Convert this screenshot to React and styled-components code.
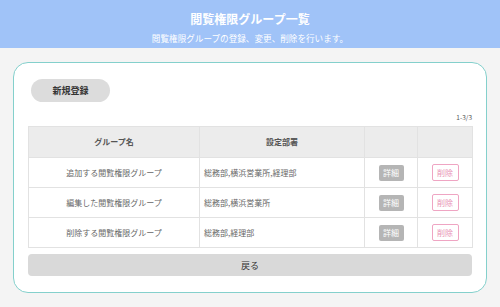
import React from "react";
import styled, { createGlobalStyle } from "styled-components";

const GlobalStyle = createGlobalStyle`
  html, body {
    margin: 0;
    padding: 0;
    background: #f4f4f4;
    font-family: "Noto Sans CJK JP", "Noto Sans", sans-serif;
  }
`;

const Header = styled.header`
  height: 48px;
  background: #a0c3f8;
  color: #fff;
  display: flex;
  flex-direction: column;
  align-items: center;
  box-sizing: border-box;
  padding-top: 10px;
`;

const Title = styled.h1`
  margin: 0;
  font-size: 12px;
  line-height: 18px;
  font-weight: bold;
`;

const Subtitle = styled.p`
  margin: 4px 0 0;
  font-size: 8.6px;
  line-height: 12px;
`;

const Main = styled.main`
  padding: 14px 13px 0;
`;

const Card = styled.section`
  background: #fff;
  border: 1px solid #84d0cc;
  border-radius: 15px;
  padding: 16px 14px 16px;
  display: flex;
  flex-direction: column;
  align-items: flex-start;
`;

const PillButton = styled.button`
  width: 79px;
  height: 23px;
  border: none;
  border-radius: 12px;
  background: #dcdcdc;
  color: #333;
  font-family: inherit;
  font-size: 9px;
  font-weight: bold;
  margin-left: 3px;
  padding: 0;
`;

const Count = styled.div`
  align-self: stretch;
  text-align: right;
  font-size: 6.5px;
  color: #555;
  line-height: 10px;
  margin-top: 10px;
  margin-bottom: 4px;
`;

const Table = styled.table`
  width: 100%;
  border-collapse: collapse;
  table-layout: fixed;
  font-size: 8px;
  line-height: 10px;
  color: #666;
`;

const Th = styled.th`
  height: 31px;
  box-sizing: border-box;
  background: #ececec;
  border: 1px solid #e2e2e2;
  font-weight: bold;
  color: #555;
  width: ${(p) => p.w}px;
  padding: 0;
`;

const Td = styled.td`
  height: 30px;
  box-sizing: border-box;
  border: 1px solid #e2e2e2;
  text-align: ${(p) => (p.left ? "left" : "center")};
  padding: 0 ${(p) => (p.left ? "4px" : "0")};
  white-space: nowrap;
`;

const DetailButton = styled.button`
  display: inline-block;
  vertical-align: middle;
  width: 25px;
  height: 16px;
  border: none;
  border-radius: 2px;
  background: #b5b5b5;
  color: #fff;
  font-family: inherit;
  font-size: 8px;
  padding: 0;
`;

const DeleteButton = styled.button`
  display: inline-block;
  vertical-align: middle;
  width: 27px;
  height: 17px;
  border: 1px solid #efa5c3;
  border-radius: 2px;
  background: #fff;
  color: #e891b5;
  font-family: inherit;
  font-size: 8px;
  padding: 0;
`;

const BackButton = styled.button`
  align-self: stretch;
  height: 22px;
  margin-top: 6px;
  border: none;
  border-radius: 4px;
  background: #d9d9d9;
  color: #333;
  font-family: inherit;
  font-size: 9px;
  padding: 0;
`;

const rows = [
  { name: "追加する閲覧権限グループ", depts: "総務部,横浜営業所,経理部" },
  { name: "編集した閲覧権限グループ", depts: "総務部,横浜営業所" },
  { name: "削除する閲覧権限グループ", depts: "総務部,経理部" },
];

export default function App() {
  return (
    <>
      <GlobalStyle />
      <Header>
        <Title>閲覧権限グループ一覧</Title>
        <Subtitle>閲覧権限グループの登録、変更、削除を行います。</Subtitle>
      </Header>
      <Main>
        <Card>
          <PillButton>新規登録</PillButton>
          <Count>1-3/3</Count>
          <Table>
            <thead>
              <tr>
                <Th w={171}>グループ名</Th>
                <Th w={165}>設定部署</Th>
                <Th w={53}></Th>
                <Th w={55}></Th>
              </tr>
            </thead>
            <tbody>
              {rows.map((r) => (
                <tr key={r.name}>
                  <Td>{r.name}</Td>
                  <Td left>{r.depts}</Td>
                  <Td>
                    <DetailButton>詳細</DetailButton>
                  </Td>
                  <Td>
                    <DeleteButton>削除</DeleteButton>
                  </Td>
                </tr>
              ))}
            </tbody>
          </Table>
          <BackButton>戻る</BackButton>
        </Card>
      </Main>
    </>
  );
}
